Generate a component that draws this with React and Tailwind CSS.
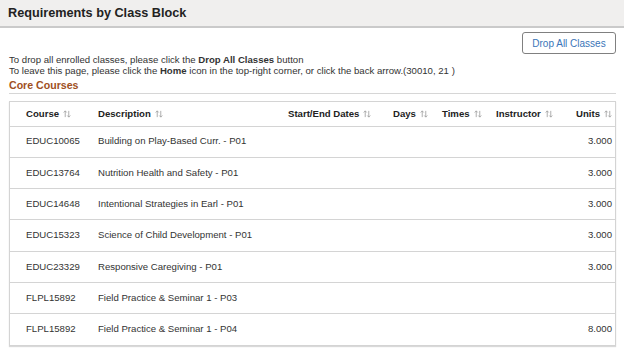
import React from "react";

const Sort = () => (
  <svg width="8" height="8" viewBox="0 0 9 9" className="inline-block ml-[4px] align-[-1px]" fill="none" stroke="#9a9a9a" strokeWidth="0.9">
    <path d="M2.5 8V1M0.8 2.8L2.5 1L4.2 2.8" />
    <path d="M6.5 1V8M4.8 6.2L6.5 8L8.2 6.2" />
  </svg>
);

const rows = [
  ["EDUC10065", "Building on Play-Based Curr. - P01", "3.000"],
  ["EDUC13764", "Nutrition Health and Safety - P01", "3.000"],
  ["EDUC14648", "Intentional Strategies in Earl - P01", "3.000"],
  ["EDUC15323", "Science of Child Development - P01", "3.000"],
  ["EDUC23329", "Responsive Caregiving - P01", "3.000"],
  ["FLPL15892", "Field Practice & Seminar 1 - P03", ""],
  ["FLPL15892", "Field Practice & Seminar 1 - P04", "8.000"],
];

export default function App() {
  return (
    <div className="w-[624px] h-[359px] bg-white text-[#333] overflow-hidden" style={{ fontFamily: '"Liberation Sans", Arial, sans-serif' }}>
      <div className="h-[28px] bg-[#f0efee] border-b-2 border-[#cacaca] flex items-center pl-[8px]">
        <h1 className="text-[12.7px] font-bold text-[#222] leading-none">Requirements by Class Block</h1>
      </div>
      <div className="px-[9px] pr-[8px]">
        <div className="flex justify-end pt-[4px]">
          <button className="w-[94px] h-[22px] border border-[#808080] rounded-[3px] text-[10px] text-[#3a75b8] bg-white">Drop All Classes</button>
        </div>
        <div className="text-[9.6px] leading-[11px] mt-[0px]">
          <div>To drop all enrolled classes, please click the <b>Drop All Classes</b> button</div>
          <div>To leave this page, please click the <b>Home</b> icon in the top-right corner, or click the back arrow.(30010, 21 )</div>
        </div>
        <div className="mt-[3px] pb-[2px] leading-[12px] border-b border-[#d6d6d6] text-[10.6px] font-bold text-[#a0501e]">Core Courses</div>
        <div className="mt-[7px] border border-[#d4d4d4] shadow-[0_1px_1px_rgba(0,0,0,0.15)]">
          <table className="w-full table-fixed border-collapse text-[9.6px]">
            <colgroup>
              <col className="w-[80px]" />
              <col className="w-[190px]" />
              <col className="w-[105px]" />
              <col className="w-[49px]" />
              <col className="w-[54px]" />
              <col className="w-[78px]" />
              <col />
            </colgroup>
            <thead>
              <tr className="h-[24px] border-b border-[#d4d4d4] font-bold text-[#222]">
                <th className="text-left font-bold pl-[16px]">Course<Sort /></th>
                <th className="text-left font-bold pl-[8px]">Description<Sort /></th>
                <th className="text-left font-bold pl-[8px]">Start/End Dates<Sort /></th>
                <th className="text-left font-bold pl-[8px]">Days<Sort /></th>
                <th className="text-left font-bold pl-[8px]">Times<Sort /></th>
                <th className="text-left font-bold pl-[8px]">Instructor<Sort /></th>
                <th className="text-right font-bold pr-[3px]">Units<Sort /></th>
              </tr>
            </thead>
            <tbody>
              {rows.map((r, i) => (
                <tr key={i} className={`h-[31.3px] ${i < rows.length - 1 ? "border-b border-[#d4d4d4]" : ""}`}>
                  <td className="pl-[16px]">{r[0]}</td>
                  <td className="pl-[8px]">{r[1]}</td>
                  <td></td>
                  <td></td>
                  <td></td>
                  <td></td>
                  <td className="text-right pr-[3px]">{r[2]}</td>
                </tr>
              ))}
            </tbody>
          </table>
        </div>
      </div>
    </div>
  );
}
